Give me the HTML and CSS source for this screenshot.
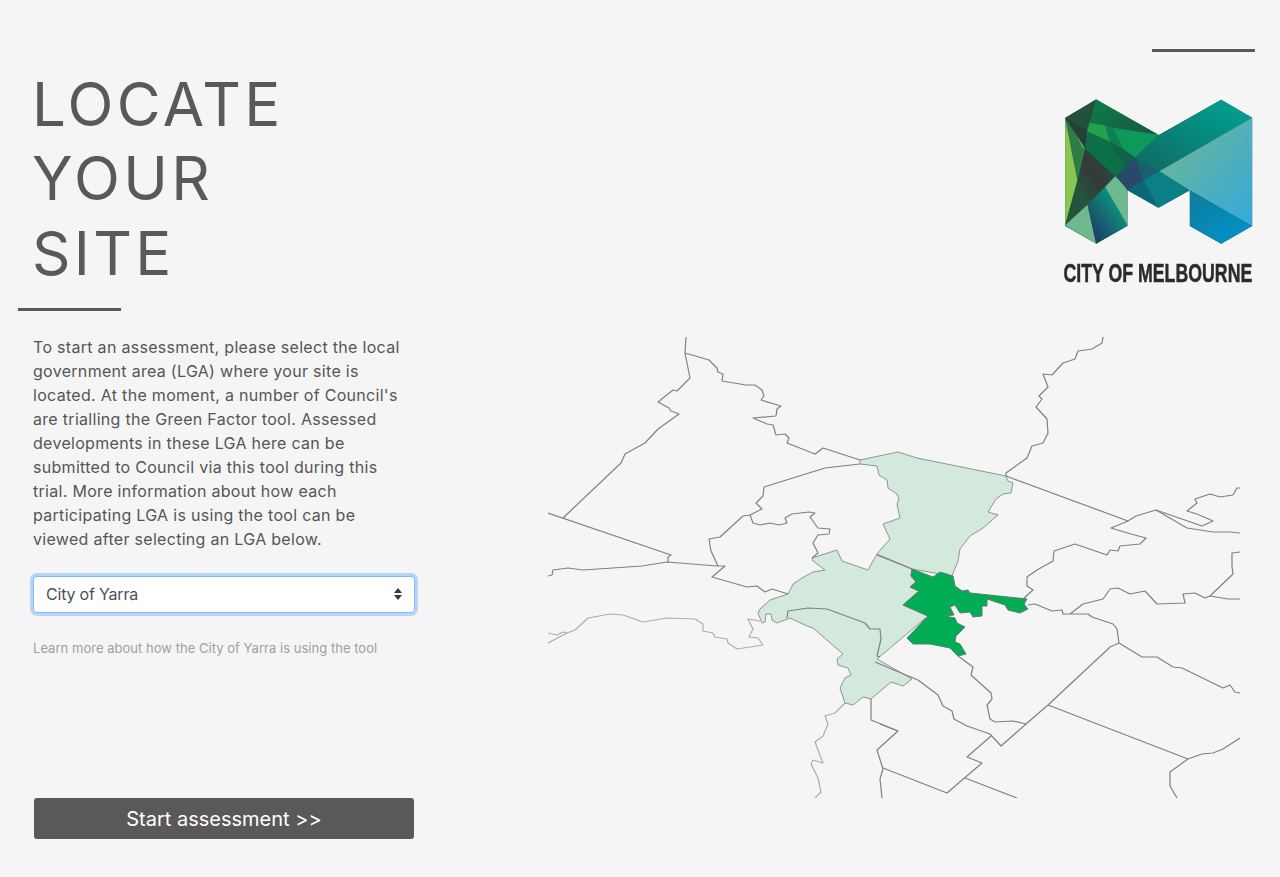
FILE: index.html
```html
<!DOCTYPE html>
<html lang="en">
  <head>
    <meta charset="UTF-8" />
    <meta name="viewport" content="width=device-width, initial-scale=1.0" />
    <title>Locate your site</title>
    <link rel="stylesheet" href="styles.css">
  </head>
  <body>
    <div class="page">
      <div class="left">
        <h1>LOCATE<br />YOUR<br />SITE</h1>
        <div class="rule"></div>
        <p class="intro">
          To start an assessment, please select the local<br />
          government area (LGA) where your site is<br />
          located. At the moment, a number of Council's<br />
          are trialling the Green Factor tool. Assessed<br />
          developments in these LGA here can be<br />
          submitted to Council via this tool during this<br />
          trial. More information about how each<br />
          participating LGA is using the tool can be<br />
          viewed after selecting an LGA below.
        </p>
        <div class="select-wrap">
          <select class="lga-select">
            <option>City of Yarra</option>
            <option>City of Melbourne</option>
          </select>
          <svg class="select-arrows" width="8" height="12" viewBox="0 0 8 12">
            <path d="M4 0 L8 5 H0 Z M0 7 H8 L4 12 Z" fill="#343a40" />
          </svg>
        </div>
        <a class="learn-more" href="#">Learn more about how the City of Yarra is using the tool</a>
        <button class="start-button">Start assessment &gt;&gt;</button>
      </div>

      <div class="right">
        <div class="rule"></div>
        <svg class="logo" width="197" height="200" viewBox="60 170 590 600">
          <defs>
            <linearGradient id="band" x1="0" y1="1" x2="1" y2="0">
              <stop offset="0" stop-color="#10695f" />
              <stop offset="1" stop-color="#00a497" />
            </linearGradient>
            <linearGradient id="pale" x1="0" y1="0" x2="1" y2="1">
              <stop offset="0" stop-color="#74b98e" />
              <stop offset="1" stop-color="#34a8dc" />
            </linearGradient>
            <linearGradient id="blue" x1="0" y1="0" x2="1" y2="1">
              <stop offset="0" stop-color="#0d7c9c" />
              <stop offset="1" stop-color="#0095d0" />
            </linearGradient>
            <linearGradient id="stripe" x1="0" y1="1" x2="1" y2="0">
              <stop offset="0.15" stop-color="#1f3f68" />
              <stop offset="0.8" stop-color="#0a9c7e" />
            </linearGradient>
            <linearGradient id="wedge" x1="1" y1="0" x2="0" y2="1">
              <stop offset="0" stop-color="#1f5a40" />
              <stop offset="0.5" stop-color="#33393a" />
              <stop offset="1" stop-color="#245a3c" />
            </linearGradient>
            <linearGradient id="topdark" x1="0" y1="0" x2="1" y2="1">
              <stop offset="0" stop-color="#0b8048" />
              <stop offset="1" stop-color="#1a5642" />
            </linearGradient>
          </defs>
          <polygon points="75,232 168,178 355,285 543,178 636,232 636,557 543,610 449,557 449,450 355,502 262,450 262,557 168,610 75,557" fill="#1a6a50" />
          <polygon points="75,233 112,420 75,555" fill="#8bc552" />
          <polygon points="75,233 135,325 112,420" fill="#2d7d48" />
          <polygon points="90,250 138,300 130,325" fill="#82c04a" />
          <polygon points="75,233 168,177 145,270" fill="#24503c" />
          <polygon points="75,233 145,270 135,325" fill="#25403a" />
          <polygon points="168,177 355,283 218,262 148,247" fill="url(#topdark)" />
          <polygon points="148,247 195,255 210,305 140,273" fill="#22a04e" />
          <polygon points="195,255 218,262 250,325 210,305" fill="#0d8050" />
          <polygon points="218,262 355,283 285,352 250,325" fill="#0b9a5c" />
          <polygon points="140,273 210,305 255,380 228,408 135,325" fill="#0b6f47" />
          <polygon points="210,305 285,352 255,380" fill="#14604a" />
          <polygon points="135,325 225,408 142,493 112,420" fill="url(#wedge)" />
          <polygon points="112,420 142,493 75,555" fill="#24553c" />
          <polygon points="75,555 142,493 168,610" fill="#6fb78c" />
          <polygon points="142,493 195,440 262,555 168,610" fill="url(#stripe)" />
          <polygon points="225,408 262,445 262,555 195,440" fill="#6db88f" />
          <polygon points="228,408 285,352 310,420 262,450" fill="#28496a" />
          <polygon points="285,352 358,393 310,420" fill="#1a5f70" />
          <polygon points="262,450 310,420 355,502" fill="#086878" />
          <polygon points="310,420 358,393 449,450 355,502" fill="#0a7f85" />
          <polygon points="285,352 355,285 543,178 636,232 358,393" fill="url(#band)" />
          <polygon points="358,393 636,232 636,557 449,450" fill="url(#pale)" />
          <polygon points="449,450 636,557 543,610 449,557" fill="url(#blue)" />
          <text class="logo-text" transform="translate(70 724) scale(0.7 1)">CITY OF MELBOURNE</text>
        </svg>

        <svg class="map" width="692" height="461" viewBox="548 336 692 461">
          <path class="suburb-pale" d="M860 459 L898 451 L917 457 L1006 475 L1008 480 L1013 482 L1011 492 L1003 493 L996 498 L988 511 L998 514 L983 527 L970 535 L960 548 L958 560 L952 575 L912 568 L880 556 L877 553 L890 538 L883 523 L900 517 L897 503 L899 498 L897 493 L888 487 L887 479 L879 474 L877 465 L860 463 Z" />
          <path class="suburb-pale" d="M812 557 L837 549 L842 560 L868 569 L877 553 L912 568 L911 575 L916 581 L910 586 L919 590 L903 604 L928 615 L877 658 L912 678 L903 685 L891 681 L871 698 L863 696 L853 704 L845 702 L840 687 L845 677 L851 674 L848 667 L838 664 L837 658 L843 653 L813 627 L807 625 L790 617 L777 622 L772 619 L771 613 L766 613 L765 621 L762 622 L758 612 L760 608 L770 599 L788 593 L793 583 L802 577 L813 571 L825 569 L813 560 Z" />
          <path class="suburb-dark" d="M912 568 L933 576 L940 571 L953 575 L955 585 L962 590 L968 589 L970 592 L1027 598 L1024 603 L1028 608 L1020 612 L1008 609 L1005 604 L987 598 L987 605 L982 605 L982 615 L973 616 L970 611 L960 612 L955 604 L950 606 L954 614 L945 615 L955 617 L957 622 L965 626 L956 635 L955 641 L960 643 L966 653 L958 655 L950 647 L930 643 L913 643 L907 637 L928 615 L903 604 L919 590 L910 586 L916 581 L911 575 Z" />

          <g class="boundary">
            <path d="M686 336 L685 352 L690 377 L677 390 L673 389 L658 401 L669 407 L671 410 L679 413 L658 428 L645 442 L625 453 L621 462 L563 517" />
            <path d="M685 352 L709 359 L717 367 L718 371 L723 373 L722 380 L746 384 L755 384 L762 389 L764 395 L761 399 L781 405 L777 408 L776 415 L753 417 L767 423 L773 424 L776 434 L785 433 L789 437 L787 442 L815 453 L823 447 L860 459" />
            <path d="M548 512 L671 554 L668 556 L668 562" />
            <path d="M548 575 L552 574 L553 569 L568 567 L583 569 L642 565 L667 561 L717 565 L725 565 L712 576 L747 586 L757 585 L765 591 L772 588 L788 593" />
            <path d="M860 463 L825 467 L764 486 L763 495 L756 502 L762 508 L750 514 L743 515 L720 536 L709 538 L711 550 L718 565" />
            <path d="M750 514 L753 522 L760 524 L770 522 L779 524 L787 522 L785 517 L792 513 L809 511 L815 512 L810 516 L818 527 L830 528 L829 533 L818 534 L813 542 L818 552 L812 557" />
            <path d="M787 617 L788 610 L808 607 L827 608 L865 622 L870 628 L880 628 L881 638 L877 655 L880 656" />
            <path d="M877 554 L912 568" />
            <path d="M875 661 L918 679 L938 694 L943 705 L952 710 L954 718 L967 725 L990 733 L1001 745 L1026 723 L1048 704 L1108 648 L1110 646 L1119 642" />
            <path d="M958 655 L973 666 L971 674 L991 692 L992 698 L987 704 L990 718 L995 721 L1013 720 L1026 723" />
            <path d="M1048 704 L1188 758 L1202 753 L1213 752 L1223 748 L1240 737" />
            <path d="M1188 758 L1170 771 L1170 785 L1177 797" />
            <path d="M1119 642 L1117 628 L1113 623 L1092 616 L1088 613 L1063 613 L1062 609 L1052 610 L1035 603 L1028 604" />
            <path d="M1070 613 L1083 603 L1103 598 L1110 588 L1118 587 L1130 593 L1145 590 L1157 603 L1185 602 L1183 593 L1195 592 L1205 597 L1210 595 L1228 598 L1240 598" />
            <path d="M1210 595 L1233 573 L1232 565 L1232 552 L1240 551" />
            <path d="M1119 642 L1142 656 L1157 656 L1173 666 L1182 667 L1223 687 L1230 684 L1235 691 L1240 692" />
            <path d="M1023 598 L1033 589 L1027 585 L1027 576 L1037 569 L1053 560 L1054 550 L1075 543 L1107 554 L1110 549 L1118 550 L1120 545 L1140 543 L1146 537 L1131 533 L1111 527 L1128 520 L1136 515 L1156 509 L1187 527 L1213 531 L1230 531 L1240 532" />
            <path d="M1156 509 L1202 525 L1213 520 L1197 513 L1187 510 L1197 502 L1195 498 L1210 493 L1220 496 L1233 494 L1237 487 L1240 487" />
            <path d="M1006 475 L1128 520" />
            <path d="M1006 475 L1006 472 L1027 457 L1032 445 L1043 442 L1048 432 L1047 418 L1036 406 L1042 398 L1039 395 L1048 386 L1043 373 L1052 374 L1063 362 L1075 358 L1078 350 L1092 348 L1102 342 L1103 336" />
            <path d="M871 698 L871 719 L898 730 L877 749 L883 768 L880 778 L882 797" />
            <path d="M880 723 L898 730" />
            <path d="M883 767 L947 792 L982 762 L967 756 L991 735" />
            <path d="M965 777 L1017 797" />
          </g>
          <g class="coast">
            <path d="M548 642 L567 632 L575 629 L588 617 L610 613 L623 614 L643 621 L667 617 L695 618 L703 623 L703 630 L713 632 L715 636 L727 638 L728 642 L737 648 L763 644 L758 637 L749 636 L753 628 L748 618 L760 620" />
            <path d="M548 632 L557 634 L563 631 L567 632" />
            <path d="M845 702 L835 712 L825 715 L828 723 L823 735 L815 741 L823 762 L813 759 L811 763 L818 777 L821 791 L815 797" />
          </g>
        </svg>
      </div>
    </div>
  </body>
</html>
```

FILE: styles.css
```css
* {
  margin: 0;
  padding: 0;
  box-sizing: border-box;
}

body {
  font-family: Inter, "Open Sans", sans-serif;
  background-color: #f5f5f5;
  color: #555;
}

.page {
  display: flex;
  height: 877px;
  overflow: hidden;
}

.left {
  width: 448px;
  padding-top: 67px;
  display: flex;
  flex-direction: column;
}

.right {
  flex: 1;
  display: flex;
  flex-direction: column;
  align-items: flex-end;
  padding: 49px 25px 0 0;
}

h1 {
  font-size: 60px;
  line-height: 74.3px;
  font-weight: 400;
  margin-left: 32px;
  letter-spacing: 3.3px;
  color: #5a5858;
}

.rule {
  width: 103px;
  height: 3px;
  background-color: #5a5858;
}

.left .rule {
  margin: 18px 0 0 18px;
}

.intro {
  margin: 24px 0 0 33px;
  font-size: 16px;
  line-height: 24px;
  white-space: nowrap;
  letter-spacing: 0.3px;
}

.select-wrap {
  position: relative;
  width: 382px;
  margin: 25px 0 0 33px;
}

.lga-select {
  display: block;
  width: 100%;
  height: 37px;
  padding: 0 12px;
  font-family: inherit;
  font-size: 16px;
  letter-spacing: -0.2px;
  color: #495057;
  background-color: #fff;
  border: 1px solid #80bdff;
  border-radius: 4px;
  box-shadow: 0 0 0 3px rgba(0, 123, 255, 0.25);
  appearance: none;
  outline: none;
}

.select-arrows {
  position: absolute;
  right: 13px;
  top: 12px;
}

.learn-more {
  margin: 27px 0 0 33px;
  font-size: 13px;
  line-height: 16px;
  letter-spacing: 0.03px;
  color: #a0a0a0;
  text-decoration: none;
}

.start-button {
  width: 380px;
  height: 41px;
  margin: auto 0 38px 34px;
  font-family: inherit;
  font-size: 20px;
  color: #fff;
  background-color: #5a5858;
  border: none;
  border-radius: 3px;
  cursor: pointer;
}

.logo {
  margin: 45px -2px 0 0;
  filter: blur(0.4px);
}

.logo-text {
  font-family: "Liberation Sans", sans-serif;
  font-size: 76px;
  font-weight: 700;
  fill: #2b2b2b;
  stroke: #2b2b2b;
  stroke-width: 1.5;
}

.map {
  margin: 40px 15px 0 0;
  filter: blur(0.3px);
}

.suburb-pale {
  fill: #d2e9db;
  stroke: #8a968e;
  stroke-width: 1;
}

.suburb-dark {
  fill: #00ad55;
  stroke: #5f7a68;
  stroke-width: 1;
}

.boundary path,
.coast path {
  fill: none;
  stroke-linejoin: round;
}

.boundary path {
  stroke: #808080;
  stroke-width: 1.2;
}

.coast path {
  stroke: #adadad;
  stroke-width: 1.2;
}
```
